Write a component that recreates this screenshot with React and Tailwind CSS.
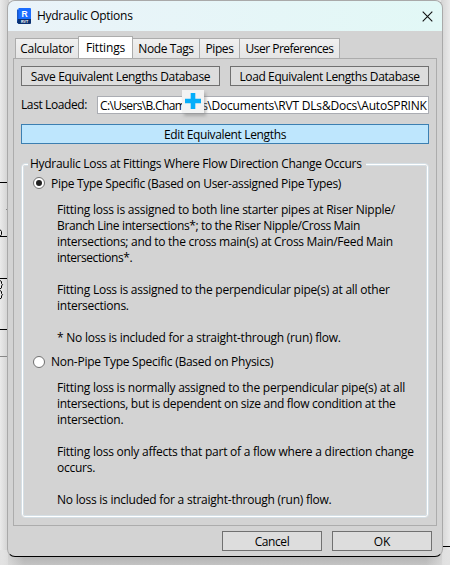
const tabs = [
  { label: "Calculator", box: "w-[64px]", text: "tracking-[-0.3px]" },
  { label: "Fittings", active: true, box: "w-[55px]", text: "tracking-[-0.15px]" },
  { label: "Node Tags", box: "w-[68px]", text: "tracking-[-0.4px]" },
  { label: "Pipes", box: "w-[41px]", text: "tracking-[-0.4px]" },
  { label: "User Preferences", box: "w-[101px]", text: "tracking-[-0.5px]" },
];

const pipeType = [
  ["Fitting loss is assigned to both line starter pipes at Riser Nipple/", "tracking-[-0.23px]"],
  ["Branch Line intersections*; to the Riser Nipple/Cross Main", "tracking-[-0.37px]"],
  ["intersections; and to the cross main(s) at Cross Main/Feed Main", "tracking-[-0.29px]"],
  ["intersections*.", "tracking-[-0.45px]"],
  ["", ""],
  ["Fitting Loss is assigned to the perpendicular pipe(s) at all other", "tracking-[-0.24px]"],
  ["intersections.", "tracking-[-0.25px]"],
  ["", ""],
  ["* No loss is included for a straight-through (run) flow.", "tracking-[-0.24px]"],
];

const nonPipeType = [
  ["Fitting loss is normally assigned to the perpendicular pipe(s) at all", "tracking-[-0.23px]"],
  ["intersections, but is dependent on size and flow condition at the", "tracking-[-0.3px]"],
  ["intersection.", "tracking-[-0.25px]"],
  ["", ""],
  ["Fitting loss only affects that part of a flow where a direction change", "tracking-[-0.24px]"],
  ["occurs.", "tracking-[-0.25px]"],
  ["", ""],
  ["No loss is included for a straight-through (run) flow.", "tracking-[-0.24px]"],
];

function Button({ children, className }) {
  return (
    <button className={`flex h-5 shrink-0 items-center justify-center border border-[#707070] bg-[#dddddd] pt-px leading-4 ${className}`}>
      {children}
    </button>
  );
}

function Radio({ checked, label, className }) {
  return (
    <div className="flex h-4 items-center pl-[12px]">
      <span className="flex h-3 w-3 shrink-0 items-center justify-center rounded-full border border-[#707070] bg-white">
        {checked && <span className="h-1.5 w-1.5 rounded-full bg-[#212121]" />}
      </span>
      <span className={`ml-[6px] ${className}`}>{label}</span>
    </div>
  );
}

function Lines({ lines }) {
  return (
    <div className="pl-[36px]">
      {lines.map(([text, cls], i) => (
        <div key={i} className="h-4"><span className={cls}>{text}</span></div>
      ))}
    </div>
  );
}

export default function App() {
  return (
    <div className="relative h-[565px] w-[450px] overflow-hidden bg-[#e6e6e6] pl-[7px] font-['Open_Sans','Noto_Sans',sans-serif] text-[12px] leading-4 whitespace-nowrap text-black">
      <svg className="absolute inset-0" width="450" height="565" fill="none" shapeRendering="crispEdges">
        <defs>
          <linearGradient id="left"><stop stopColor="#eaeaea" /><stop offset="1" stopColor="#cfcfcf" /></linearGradient>
          <linearGradient id="right"><stop stopColor="#d4d4d4" /><stop offset="1" stopColor="#eaeaea" /></linearGradient>
          <linearGradient id="bottom" x2="0" y2="1"><stop stopColor="#a9a9a9" /><stop offset="1" stopColor="#c3c3c3" /></linearGradient>
          <linearGradient id="fade"><stop stopColor="#e2e2e2" /><stop offset="1" stopColor="#e2e2e2" stopOpacity="0" /></linearGradient>
        </defs>
        <path fill="url(#left)" d="M0 0h9v565H0z" />
        <path fill="url(#right)" d="M441 0h9v565h-9z" />
        <path fill="url(#bottom)" d="M8 550h434v15H8z" />
        <path fill="url(#fade)" d="M0 550h24v15H0z" />
        <path fill="url(#fade)" transform="matrix(-1 0 0 1 450 0)" d="M0 550h24v15H0z" />
        <path stroke="#000" d="M0 182.5h8M0 236.5h8M0 278.5h8M0 329.5h8M443 546.5h7" />
        <path stroke="#888" d="M6 209.5h2M0 356.5h8" />
        <path stroke="#000" shapeRendering="auto" d="M0 229.5l1.5 2v3l-1.5 2M0 280.5l1.500 1v2l1 1.200-1 1.200v2l-1.500 1M0 290.500l1.500 1v2l1 1.200-1 1.200v2l-1.500 1" />
      </svg>

      <div className="relative h-[557px] w-[436px] overflow-hidden rounded-[8px] border border-[#a9a9a9] border-b-black bg-[#d3d3d3]">
        <header className="flex h-[30px] items-center bg-linear-to-r from-[#eaf3f9] to-[#e2f8f6] pr-[9px] pl-[9px]">
          <svg width="14" height="16" viewBox="0 0 14 16">
            <path fill="#1858c8" d="M0 1.5h2V16H1.5L0 14.5z" />
            <path fill="#1a6dff" d="M1.5 0H13q1 0 1 1v10H1.5z" />
            <path fill="#0b3172" d="M1 11h13v4q0 1-1 1H1.8L0 14.5z" />
            <text x="4.5" y="9" fill="#fff" fontFamily="Liberation Sans" fontSize="8.5" fontWeight="bold">R</text>
            <text x="4" y="14.7" fill="#fff" fontFamily="Liberation Sans" fontSize="3.6" fontWeight="bold">RVT</text>
          </svg>
          <span className="ml-[6px] text-[12px] tracking-[-0.28px]">Hydraulic Options</span>
          <svg className="ml-auto" width="11" height="11" viewBox="0 0 11 11">
            <path d="M.7.7l9.6 9.6M10.3.7L.7 10.3" stroke="#111" strokeWidth="1.1" />
          </svg>
        </header>

        <main className="px-[5px] pt-[5px]">
          <nav className="flex h-[22px] items-end pl-[2px]">
            {tabs.map((t) => (
              <div
                key={t.label}
                className={`-mr-px flex shrink-0 justify-center border border-b-0 border-[#acacac] ${t.box} ${t.active ? "relative z-10 h-[22px] bg-white pt-[3px]" : "h-5 bg-linear-to-b from-[#f0f0f0] to-[#e5e5e5] pt-[2px]"}`}
              >
                <span className={t.text}>{t.label}</span>
              </div>
            ))}
          </nav>

          <section className="h-[468px] w-[424px] border border-[#acacac] px-[7px] pt-[7px]">
            <div className="flex justify-between">
              <Button className="w-[199px] tracking-[-0.36px]">Save Equivalent Lengths Database</Button>
              <Button className="w-[199px] tracking-[-0.38px]">Load Equivalent Lengths Database</Button>
            </div>

            <div className="relative mt-[10px] flex h-[18px] items-center">
              <span className="w-[76px] tracking-[-0.4px]">Last Loaded:</span>
              <div className="h-[18px] min-w-0 flex-1 border border-[#abadb3] bg-white pt-px pl-[2px]">
                <span className="tracking-[-0.65px]">C:\Users\B.Chambers</span>
                <span className="tracking-[-0.19px]">\Documents\RVT DLs&amp;Docs\AutoSPRINK</span>
              </div>
              <div className="absolute top-[-6px] left-[161px] flex h-[23px] w-[22px] items-center justify-center bg-[#f3f3f3] pb-px shadow-[2px_3px_3px_#8888]">
                <svg width="16" height="16" viewBox="0 0 16 16">
                  <path d="M8 0v16M0 8h16" stroke="#06aefa" strokeWidth="4.6" />
                </svg>
              </div>
            </div>

            <button className="mt-[10px] flex h-5 w-full items-center justify-center border border-[#3c7fb1] bg-[#bee6fd] pt-px tracking-[-0.36px]">
              Edit Equivalent Lengths
            </button>

            <fieldset className="relative mt-[11px] h-[363px] w-[408px]">
              <div className="absolute inset-x-0 top-2 bottom-0 rounded-[4px] border border-[#d5dfe5]">
                <div className="h-full rounded-[3px] border border-white">
                  <div className="h-full rounded-[2px] border border-[#d5dfe5]" />
                </div>
              </div>
              <div className="relative h-4 pt-px pl-[7px]">
                <span className="inline-block bg-[#d3d3d3] pr-1 pl-[2px] tracking-[-0.28px]">
                  Hydraulic Loss at Fittings Where Flow Direction Change Occurs
                </span>
              </div>
              <div className="relative pt-[4px]">
                <Radio checked label="Pipe Type Specific (Based on User-assigned Pipe Types)" className="pt-px tracking-[-0.31px]" />
                <div className="pt-[11px]"><Lines lines={pipeType} /></div>
                <div className="pt-[8px]">
                  <Radio label="Non-Pipe Type Specific (Based on Physics)" className="tracking-[-0.26px]" />
                </div>
                <div className="pt-[10px]"><Lines lines={nonPipeType} /></div>
              </div>
            </fieldset>
          </section>

          <footer className="mt-[5px] flex justify-end gap-[10px] pr-[5px]">
            <Button className="w-[100px] tracking-[-0.4px]">Cancel</Button>
            <Button className="w-[100px]">OK</Button>
          </footer>
        </main>
      </div>
    </div>
  );
}
